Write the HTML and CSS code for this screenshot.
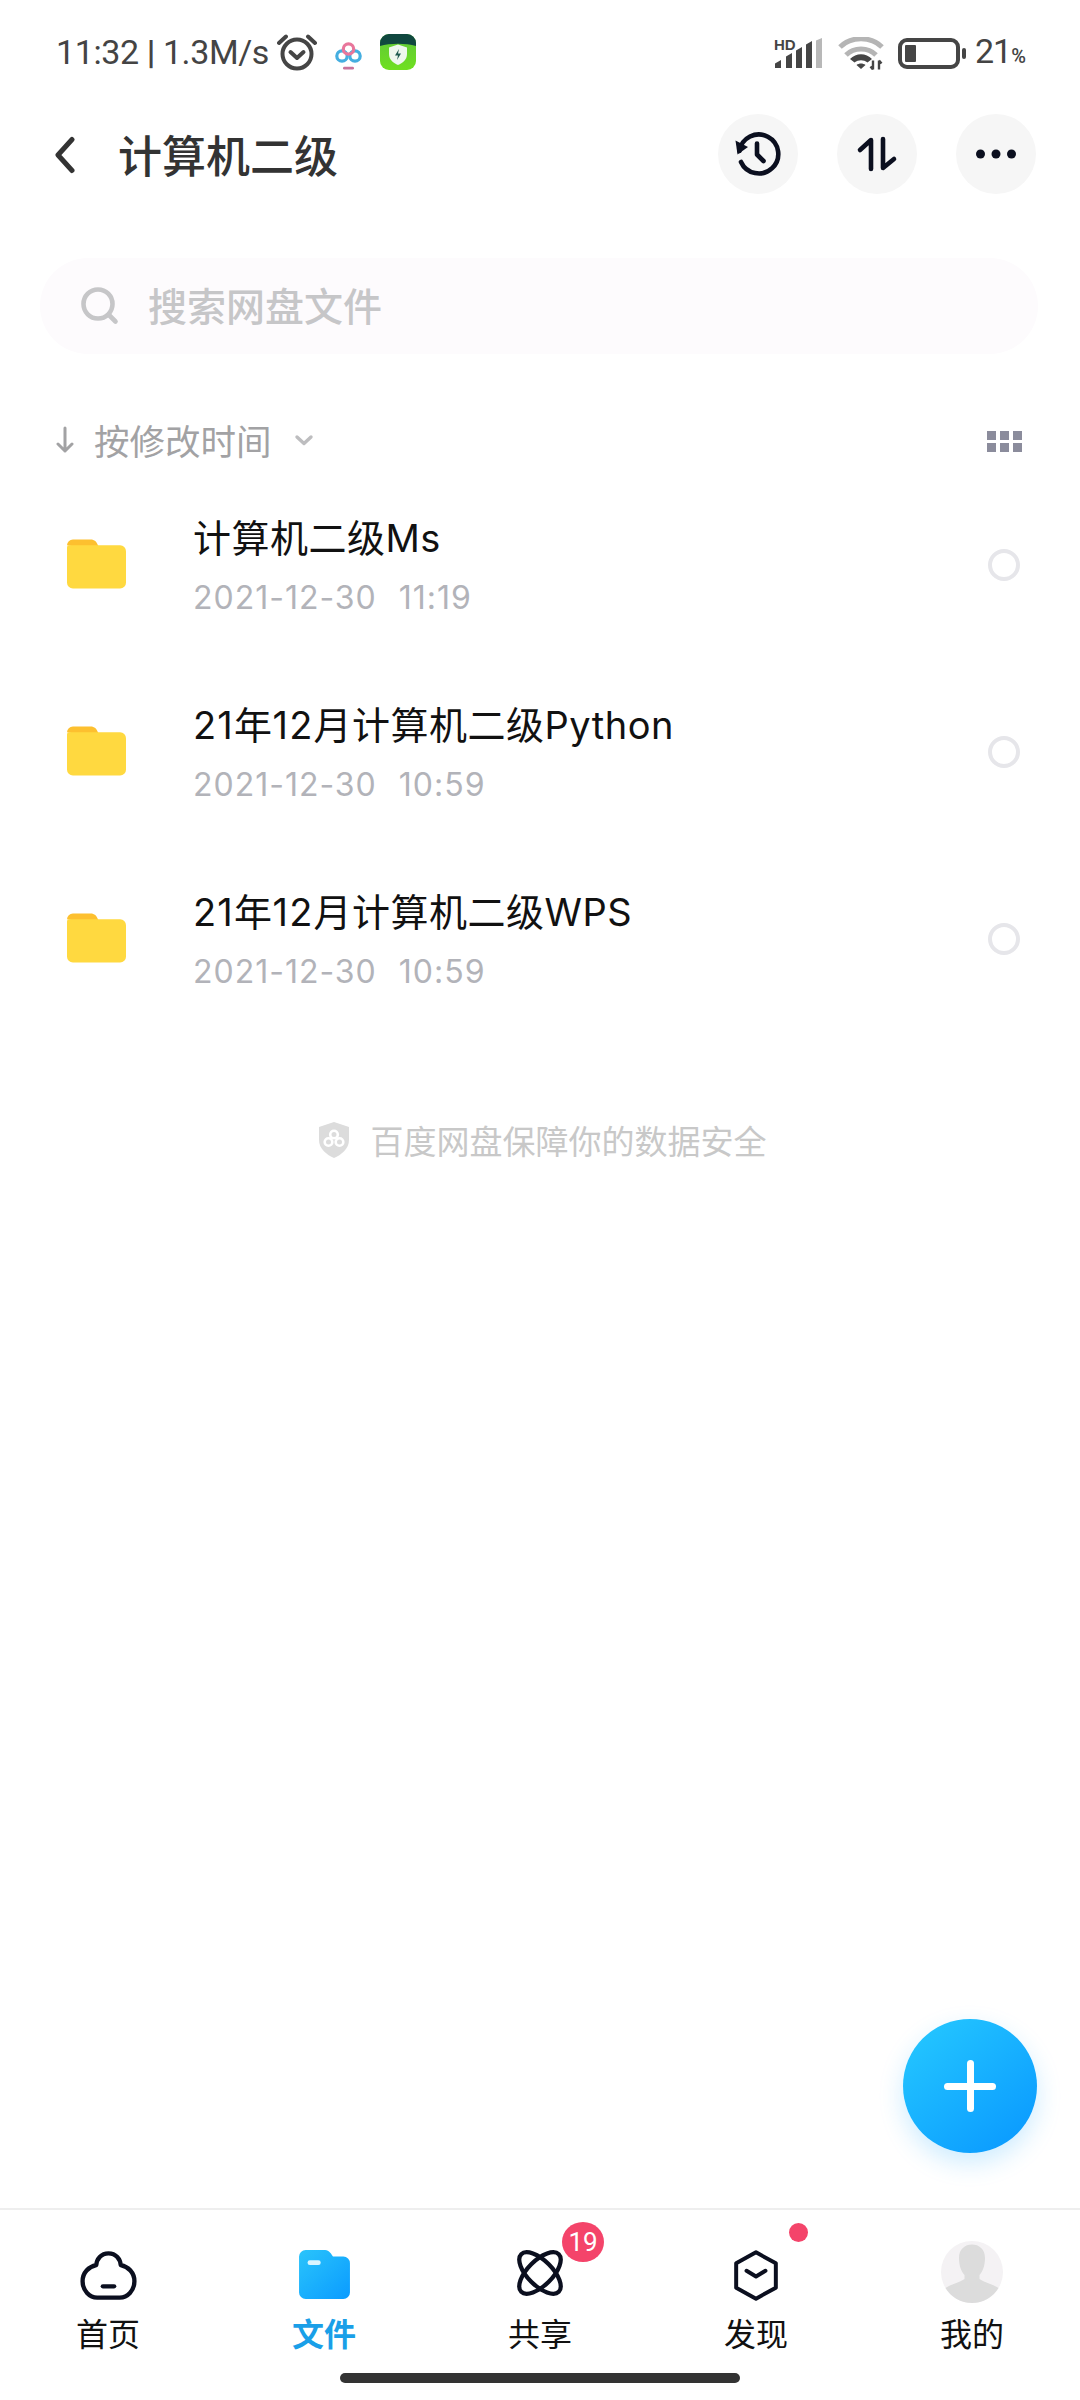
FILE: index.html
```html
<!DOCTYPE html>
<html lang="zh">
<head>
<meta charset="utf-8">
<title>计算机二级</title>
<link rel="stylesheet" href="styles.css">
</head>
<body>
<div class="app">
  <div class="status">
    <div class="status-left">
      <span class="status-text">11:32 <b class="sep">|</b> 1.3M/s</span>
      <svg class="ic-alarm" viewBox="0 0 40 38"><g fill="none" stroke="#454545" stroke-width="4" stroke-linecap="round" stroke-linejoin="round"><circle cx="20" cy="21" r="14.5"/><path d="M2 10 9 3.500M38 10 31 3.500"/><path d="M13.500 19 20 25 26.500 19"/></g></svg>
      <svg class="ic-cloud" viewBox="0 0 27 28"><g fill="none" stroke-width="3.200"><circle cx="7" cy="14" r="5.200" stroke="#45aee0"/><circle cx="20" cy="14" r="5.200" stroke="#45aee0"/><circle cx="13.500" cy="7" r="5.200" stroke="#e8769b"/></g><rect x="8" y="24.800" width="11" height="2.800" rx="1.400" fill="#c9739b"/></svg>
      <svg class="ic-app" viewBox="0 0 36 36"><defs><linearGradient id="appg" x1="0" y1="0" x2="0" y2="1"><stop offset="0" stop-color="#5fc63a"/><stop offset="1" stop-color="#6fe01f"/></linearGradient></defs><rect width="36" height="36" rx="9" fill="url(#appg)"/><path d="M0 12V9a9 9 0 0 1 9-9h18a9 9 0 0 1 9 9v3C26 9 10 9 0 12Z" fill="#10473f"/><path d="M18 10.500 27 13.500V20c0 6-4.500 9-9 11-4.500-2-9-5-9-11v-6.500Z" fill="#eef7ee"/><path d="M19 15 15 21.500h3L17 26l4-6.500h-3Z" fill="#1f5a50"/></svg>
    </div>
    <div class="status-right">
      <div class="signal">
        <svg class="ic-signal" viewBox="0 0 51 30"><g fill="#454545"><path d="M0 30v-4.500L6 22v8Z"/><path d="M11 30V18.500L17 15V30Z"/><path d="M21 30V12.500L27 9V30Z"/><path d="M31 30V6.500L37 3V30Z"/></g><path d="M41 30V2.500L47 0V30Z" fill="#b8b8b8"/></svg>
        <span class="hd">HD</span>
      </div>
      <svg class="ic-wifi" viewBox="0 0 46 33"><g fill="none" stroke="#b5b5b5" stroke-width="5"><path d="M2 10C13-1 33-1 44 10"/><path d="M8 18C16 10 30 10 38 18"/></g><path d="M12 22C18 15.500 28 15.500 34 22L29.500 25.500C25.500 22.500 20.500 22.500 16.500 25.500Z" fill="#454545"/><path d="M18.500 28C21 26 25 26 27.500 28L23 32Z" fill="#454545"/><path d="M35 23.500V32.500M35 32.500 32.500 29.500M41 32.500V23.500M41 23.500 43.500 26.500" stroke="#454545" stroke-width="2.400" fill="none"/></svg>
      <div class="battery"><span class="battery-fill"></span></div>
      <span class="battery-nib"></span>
      <span class="pct">21<small>%</small></span>
    </div>
  </div>

  <header class="topbar">
    <svg class="ic-back" viewBox="0 0 22 38"><path d="M18 3.500 4 19 18 34.500" fill="none" stroke="#333" stroke-width="5" stroke-linecap="round" stroke-linejoin="round"/></svg>
    <h1 class="title">计算机二级</h1>
    <div class="actions">
      <span class="round-btn"><svg class="ic-action" viewBox="0 0 48 48"><g fill="none" stroke="#0b0f1f" stroke-width="4.600" stroke-linecap="round" stroke-linejoin="round"><path d="M5.500 21A19.500 19.500 0 1 1 7 32"/><path d="M23 13.500V24.500L29.500 31"/></g><path d="M1.500 10.500 14 17 3.500 24.500Z" fill="#0b0f1f"/></svg></span>
      <span class="round-btn"><svg class="ic-action" viewBox="0 0 48 48"><g fill="none" stroke="#0b0f1f" stroke-width="4.600" stroke-linecap="round" stroke-linejoin="round"><path d="M18 39V10L7 20"/><path d="M30 9V38L41 29"/></g></svg></span>
      <span class="round-btn"><svg class="ic-action" viewBox="0 0 48 48"><g fill="#0b0f1f"><circle cx="8.500" cy="24" r="4.500"/><circle cx="24" cy="24" r="4.500"/><circle cx="39.500" cy="24" r="4.500"/></g></svg></span>
    </div>
  </header>

  <div class="search">
    <svg class="ic-search" viewBox="0 0 38 38"><g fill="none" stroke="#c6c6c8" stroke-width="4.600" stroke-linecap="round"><circle cx="17" cy="17" r="14.500"/><path d="M28 28 34.500 34.500"/></g></svg>
    <span class="search-text">搜索网盘文件</span>
  </div>

  <div class="sortbar">
    <svg class="ic-sort" viewBox="0 0 18 28"><path d="M9 2V25M2 18 9 25 16 18" fill="none" stroke="#a2a2a4" stroke-width="3" stroke-linecap="round" stroke-linejoin="round"/></svg>
    <span class="sort-text">按修改时间</span>
    <svg class="ic-chev" viewBox="0 0 20 12"><path d="M3 3 10 9.500 17 3" fill="none" stroke="#bdbdbf" stroke-width="3.400" stroke-linecap="round" stroke-linejoin="round"/></svg>
    <div class="grid-ic"><i></i><i></i><i></i><i></i><i></i><i></i></div>
  </div>

  <main class="list">
    <div class="row">
      <svg class="folder" viewBox="0 0 60 52"><path d="M0 8a6 6 0 0 1 6-6h18c4 0 6 2 8 7H6Z" fill="#fdc02f"/><path d="M0 10a2 2 0 0 1 2-2h52a6 6 0 0 1 6 6v32a6 6 0 0 1-6 6H6a6 6 0 0 1-6-6Z" fill="#ffd940"/></svg>
      <div class="row-body">
        <div class="row-title">计算机二级Ms</div>
        <div class="row-date"><span>2021-12-30</span><span>11:19</span></div>
      </div>
      <span class="check"></span>
    </div>
    <div class="row">
      <svg class="folder" viewBox="0 0 60 52"><path d="M0 8a6 6 0 0 1 6-6h18c4 0 6 2 8 7H6Z" fill="#fdc02f"/><path d="M0 10a2 2 0 0 1 2-2h52a6 6 0 0 1 6 6v32a6 6 0 0 1-6 6H6a6 6 0 0 1-6-6Z" fill="#ffd940"/></svg>
      <div class="row-body">
        <div class="row-title"><span class="num">21</span>年<span class="num">12</span>月计算机二级Python</div>
        <div class="row-date"><span>2021-12-30</span><span>10:59</span></div>
      </div>
      <span class="check"></span>
    </div>
    <div class="row">
      <svg class="folder" viewBox="0 0 60 52"><path d="M0 8a6 6 0 0 1 6-6h18c4 0 6 2 8 7H6Z" fill="#fdc02f"/><path d="M0 10a2 2 0 0 1 2-2h52a6 6 0 0 1 6 6v32a6 6 0 0 1-6 6H6a6 6 0 0 1-6-6Z" fill="#ffd940"/></svg>
      <div class="row-body">
        <div class="row-title"><span class="num">21</span>年<span class="num">12</span>月计算机二级WPS</div>
        <div class="row-date"><span>2021-12-30</span><span>10:59</span></div>
      </div>
      <span class="check"></span>
    </div>
    <div class="safe">
      <svg class="ic-shield" viewBox="0 0 32 36"><path d="M16 0 31 5V18C31 27 23 33 16 36 9 33 1 27 1 18V5Z" fill="#dcdcdc"/><g fill="none" stroke="#fff" stroke-width="2.600"><circle cx="16" cy="12.500" r="3.800"/><circle cx="10.500" cy="20" r="3.800"/><circle cx="21.500" cy="20" r="3.800"/></g></svg>
      <span class="safe-text">百度网盘保障你的数据安全</span>
    </div>
  </main>

  <button class="fab" aria-label="新建"></button>

  <nav class="tabs">
    <div class="tab">
      <span class="tab-icon"><svg class="ic-home" viewBox="0 0 60 52"><path d="M30 2.500C38 2.500 42.500 8.500 43 15 51 16.500 57.500 23 57.500 32 57.500 42 50 49.500 42 49.500H18C10 49.500 2.500 42 2.500 32 2.500 23 9 16.500 17 15 17.500 8.500 22 2.500 30 2.500Z" fill="none" stroke="#0b0f1f" stroke-width="4.600" stroke-linejoin="round"/><path d="M24 37.500H36" stroke="#0b0f1f" stroke-width="4.600" stroke-linecap="round"/></svg></span>
      <span class="tab-label">首页</span>
    </div>
    <div class="tab">
      <span class="tab-icon"><svg class="ic-file" viewBox="0 0 54 52"><defs><linearGradient id="fileg" x1="0" y1="0" x2="1" y2="1"><stop offset="0" stop-color="#2ac4fb"/><stop offset="1" stop-color="#0a9bff"/></linearGradient></defs><path d="M0 7a7 7 0 0 1 7-7h19c5 0 7 2 10 7h11a7 7 0 0 1 7 7v31a7 7 0 0 1-7 7H7a7 7 0 0 1-7-7Z" fill="url(#fileg)"/><rect x="9" y="11" width="14" height="5" rx="2.500" fill="#d9f5ff"/></svg></span>
      <span class="tab-label tab-on">文件</span>
    </div>
    <div class="tab">
      <span class="tab-icon"><svg class="ic-share" viewBox="0 0 52 52"><g fill="none" stroke="#0b0f1f" stroke-width="4.800"><ellipse cx="26" cy="26" rx="14" ry="30" transform="rotate(-45 26 26)"/><ellipse cx="26" cy="26" rx="14" ry="30" transform="rotate(45 26 26)"/></g></svg><span class="badge">19</span></span>
      <span class="tab-label">共享</span>
    </div>
    <div class="tab">
      <span class="tab-icon"><svg class="ic-hex" viewBox="0 0 48 54"><path d="M24 2.500 45 14V40L24 51.500 3 40V14Z" fill="none" stroke="#0b0f1f" stroke-width="4.200" stroke-linejoin="round"/><path d="M14 22 24 28 34 22" fill="none" stroke="#0b0f1f" stroke-width="4.200" stroke-linecap="round" stroke-linejoin="round"/></svg><span class="dot"></span></span>
      <span class="tab-label">发现</span>
    </div>
    <div class="tab">
      <span class="tab-icon"><svg class="ic-avatar" viewBox="0 0 62 62"><circle cx="31" cy="31" r="31" fill="#f4f2f4"/><path d="M31 3.500C24 3.500 18 8 18 17 18 24 20 30 23.500 34V38C18 42 10 43 4.500 47 10 56 20 62 31 62 42 62 52 56 57.500 47 52 43 44 42 38.500 38V34C42 30 44 24 44 17 44 8 38 3.500 31 3.500Z" fill="#dcdcdc"/></svg></span>
      <span class="tab-label">我的</span>
    </div>
  </nav>
  <div class="home-area"><span class="home-bar"></span></div>
</div>
</body>
</html>
```
FILE: styles.css
```css
* { box-sizing: border-box; }
html, body { margin: 0; padding: 0; background: #fff; }
body { font-family: Inter, "Noto Sans CJK SC", sans-serif; }
svg { display: block; flex: none; }

.app { position: relative; width: 1080px; height: 2400px; display: flex; flex-direction: column; overflow: hidden; }

.status { height: 104px; padding: 33px 0 0 56px; display: flex; justify-content: space-between; align-items: flex-start; color: #444; font-family: Roboto, sans-serif; }
.status-left { display: flex; align-items: center; height: 38px; }
.status-text { font-size: 34px; line-height: 38px; letter-spacing: -.4px; white-space: nowrap; width: 220px; }
.sep { font-weight: 700; }
.ic-alarm { width: 40px; height: 38px; margin-left: 1px; }
.ic-cloud { width: 27px; height: 28px; margin: 8px 0 0 18px; }
.ic-app { width: 36px; height: 36px; margin-left: 18px; }
.status-right { display: flex; align-items: center; height: 36px; width: 309px; margin-top: 2px; }
.signal { position: relative; width: 51px; height: 30px; margin-left: 4px; }
.hd { position: absolute; left: -1px; top: -1px; font: 700 15px/15px "Liberation Sans", sans-serif; color: #454545; }
.ic-signal { width: 51px; height: 30px; }
.ic-wifi { width: 46px; height: 33px; margin-left: 12px; }
.battery { width: 62px; height: 31px; margin-left: 14px; border: 4px solid #454545; border-radius: 9px; padding: 3px; }
.battery-fill { display: block; width: 11px; height: 100%; background: #454545; border-radius: 1px; }
.battery-nib { width: 4px; height: 11px; margin-left: 2px; background: #454545; border-radius: 2px; }
.pct { margin-left: 9px; font-size: 34px; line-height: 36px; letter-spacing: -1px; white-space: nowrap; }
.pct small { font-size: 20px; font-weight: 500; letter-spacing: 0; }

.topbar { height: 100px; padding: 0 44px 0 54px; display: flex; align-items: center; }
.ic-back { width: 22px; height: 38px; margin-top: 2px; }
.title { margin: 5px 0 0 42px; font-size: 44px; font-weight: 500; line-height: 60px; color: #333; }
.actions { margin-left: auto; display: flex; gap: 39px; }
.round-btn { width: 80px; height: 80px; border-radius: 50%; background: #f6f6f6; display: flex; align-items: center; justify-content: center; }
.ic-action { width: 48px; height: 48px; }

.search { margin: 54px 42px 0 40px; height: 96px; border-radius: 48px; background: #fdfbfd; padding-left: 41px; display: flex; align-items: center; }
.ic-search { width: 38px; height: 38px; }
.search-text { margin: -5px 0 0 29px; font-size: 39px; font-weight: 500; color: #c6c6c8; }

.sortbar { margin-top: 54px; height: 64px; padding: 0 58px 0 56px; display: flex; align-items: center; }
.ic-sort { width: 18px; height: 28px; }
.sort-text { margin: -2px 0 0 20px; font-size: 35.500px; color: #a2a2a4; }
.ic-chev { width: 20px; height: 12px; margin-left: 22px; }
.grid-ic { margin: 2px 0 0 auto; display: grid; grid-template-columns: repeat(3, 9px); grid-auto-rows: 9px; gap: 3px 4px; }
.grid-ic i { background: #8b8c9c; }

.list { flex: 1; }
.row { height: 187px; padding: 0 60px 0 67px; display: flex; align-items: center; }
.folder { width: 59px; height: 52px; margin-top: -5px; }
.row-body { margin: 2px 0 0 67px; flex: 1; }
.row-title { font-size: 38px; line-height: 50px; letter-spacing: .5px; color: #111; white-space: nowrap; }
.num { letter-spacing: 1.200px; }
.row-date { margin-top: 12px; display: flex; gap: 22px; font-size: 32px; line-height: 46px; letter-spacing: 1px; color: #b2b3b9; }
.check { width: 32px; height: 32px; border: 4px solid #e6e6ea; border-radius: 50%; margin-top: -1px; }

.safe { margin-top: 83px; display: flex; align-items: center; justify-content: center; padding-left: 4px; }
.ic-shield { width: 32px; height: 36px; }
.safe-text { margin-left: 21px; font-size: 33px; color: #c8c8c8; }

.fab { position: absolute; left: 903px; top: 2019px; width: 134px; height: 134px; padding: 0; border: 0; border-radius: 50%; background: linear-gradient(140deg, #26caff, #0896ff); box-shadow: 0 10px 24px rgba(30, 170, 255, .22); }
.fab::before, .fab::after { content: ""; position: absolute; left: 41px; top: 63.500px; width: 52px; height: 7px; border-radius: 4px; background: #fff; }
.fab::after { left: 63.500px; top: 41px; width: 7px; height: 52px; }

.tabs { height: 162px; border-top: 2px solid #eee; display: flex; }
.tab { flex: 1; display: flex; flex-direction: column; align-items: center; padding-top: 40px; }
.tab-icon { position: relative; height: 52px; display: flex; align-items: flex-start; justify-content: center; }
.ic-home { width: 57px; height: 49px; margin-top: 1px; }
.ic-file { width: 51px; height: 49px; }
.ic-share { width: 46px; height: 46px; }
.ic-hex { width: 46px; height: 51px; }
.ic-avatar { width: 62px; height: 62px; margin-top: -9px; }
.tab-label { margin-top: 12px; font-size: 32px; line-height: 42px; color: #111; }
.tab-on { color: #1a9fe8; font-weight: 700; }
.badge { position: absolute; left: 45px; top: -28px; width: 42px; height: 40px; border-radius: 50%; background: #f4446a; color: #fff; font: 26px/40px Roboto, sans-serif; text-align: center; }
.dot { position: absolute; left: 56px; top: -27px; width: 19px; height: 19px; border-radius: 50%; background: #f4446a; }

.home-area { height: 30px; display: flex; justify-content: center; }
.home-bar { width: 400px; height: 10px; margin-top: 3px; border-radius: 5px; background: #333; }
```
